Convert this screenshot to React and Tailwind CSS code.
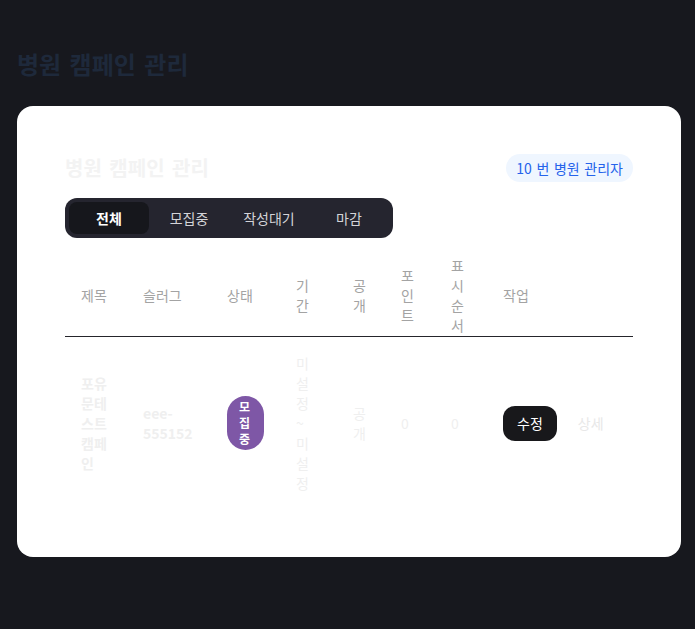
import React from "react";

const font = { fontFamily: '"Noto Sans CJK KR", "Noto Sans", sans-serif' };

export default function App() {
  const tabs = ["전체", "모집중", "작성대기", "마감"];
  return (
    <div className="min-h-[629px] bg-[#17181e] px-[17px] pt-12 pb-[73px]" style={font}>
      <h1 className="text-2xl leading-8 font-bold text-[#1e293b] [word-spacing:3px]">병원 캠페인 관리</h1>
      <div className="mt-[26px] w-[664px] rounded-2xl bg-white p-12">
        <div className="flex items-center justify-between">
          <h2 className="text-xl leading-7 font-bold text-[#f3f3f3] [word-spacing:3px]">병원 캠페인 관리</h2>
          <span className="rounded-full bg-[#eff6ff] px-2.5 text-sm leading-7 text-[#2563eb] [word-spacing:1.5px]">
            10 번 병원 관리자
          </span>
        </div>
        <div className="mt-4 inline-flex rounded-xl bg-[#25252f] p-1">
          {tabs.map((t, i) => (
            <button
              key={t}
              className={
                "h-8 w-20 rounded-lg text-sm " +
                (i === 0 ? "bg-[#16171c] font-semibold text-white" : "text-[#d4d4d8]")
              }
            >
              {t}
            </button>
          ))}
        </div>
        <table className="mt-[17px] w-[568px] table-fixed border-collapse text-sm leading-5">
          <colgroup>
            <col className="w-[62px]" />
            <col className="w-[84px]" />
            <col className="w-[69px]" />
            <col className="w-[57px]" />
            <col className="w-[48px]" />
            <col className="w-[50px]" />
            <col className="w-[52px]" />
            <col className="w-[146px]" />
          </colgroup>
          <thead>
            <tr className="border-b border-[#25252b] text-left text-[#a3a3a3]">
              {["제목", "슬러그", "상태", "기간", "공개", "포인트", "표시순서", "작업"].map((h) => (
                <th key={h} className="px-4 py-0 pb-[1px] align-middle font-normal break-all">
                  {h}
                </th>
              ))}
            </tr>
          </thead>
          <tbody>
            <tr className="text-[#efefef]">
              <td className="px-4 py-4 align-middle font-semibold break-all">포유문테스트캠페인</td>
              <td className="px-4 py-4 align-middle font-semibold">eee-555152</td>
              <td className="px-4 py-4 align-middle">
                <span className="inline-block rounded-full bg-[#7e57a6] px-3 py-[3px] text-xs leading-4 font-bold text-white break-all">
                  모집중
                </span>
              </td>
              <td className="px-4 py-4 align-middle break-all">
                미설정
                <span className="block">~</span>
                미설정
              </td>
              <td className="px-4 py-4 align-middle break-all">공개</td>
              <td className="px-4 py-4 align-middle">0</td>
              <td className="px-4 py-4 align-middle">0</td>
              <td className="px-4 py-4 align-middle">
                <div className="flex items-center gap-[21px]">
                  <button className="h-[35px] rounded-xl bg-[#18181b] px-[14px] text-sm leading-5 text-white">
                    수정
                  </button>
                  <span className="text-[#e8e8e8]">상세</span>
                </div>
              </td>
            </tr>
          </tbody>
        </table>
      </div>
    </div>
  );
}
